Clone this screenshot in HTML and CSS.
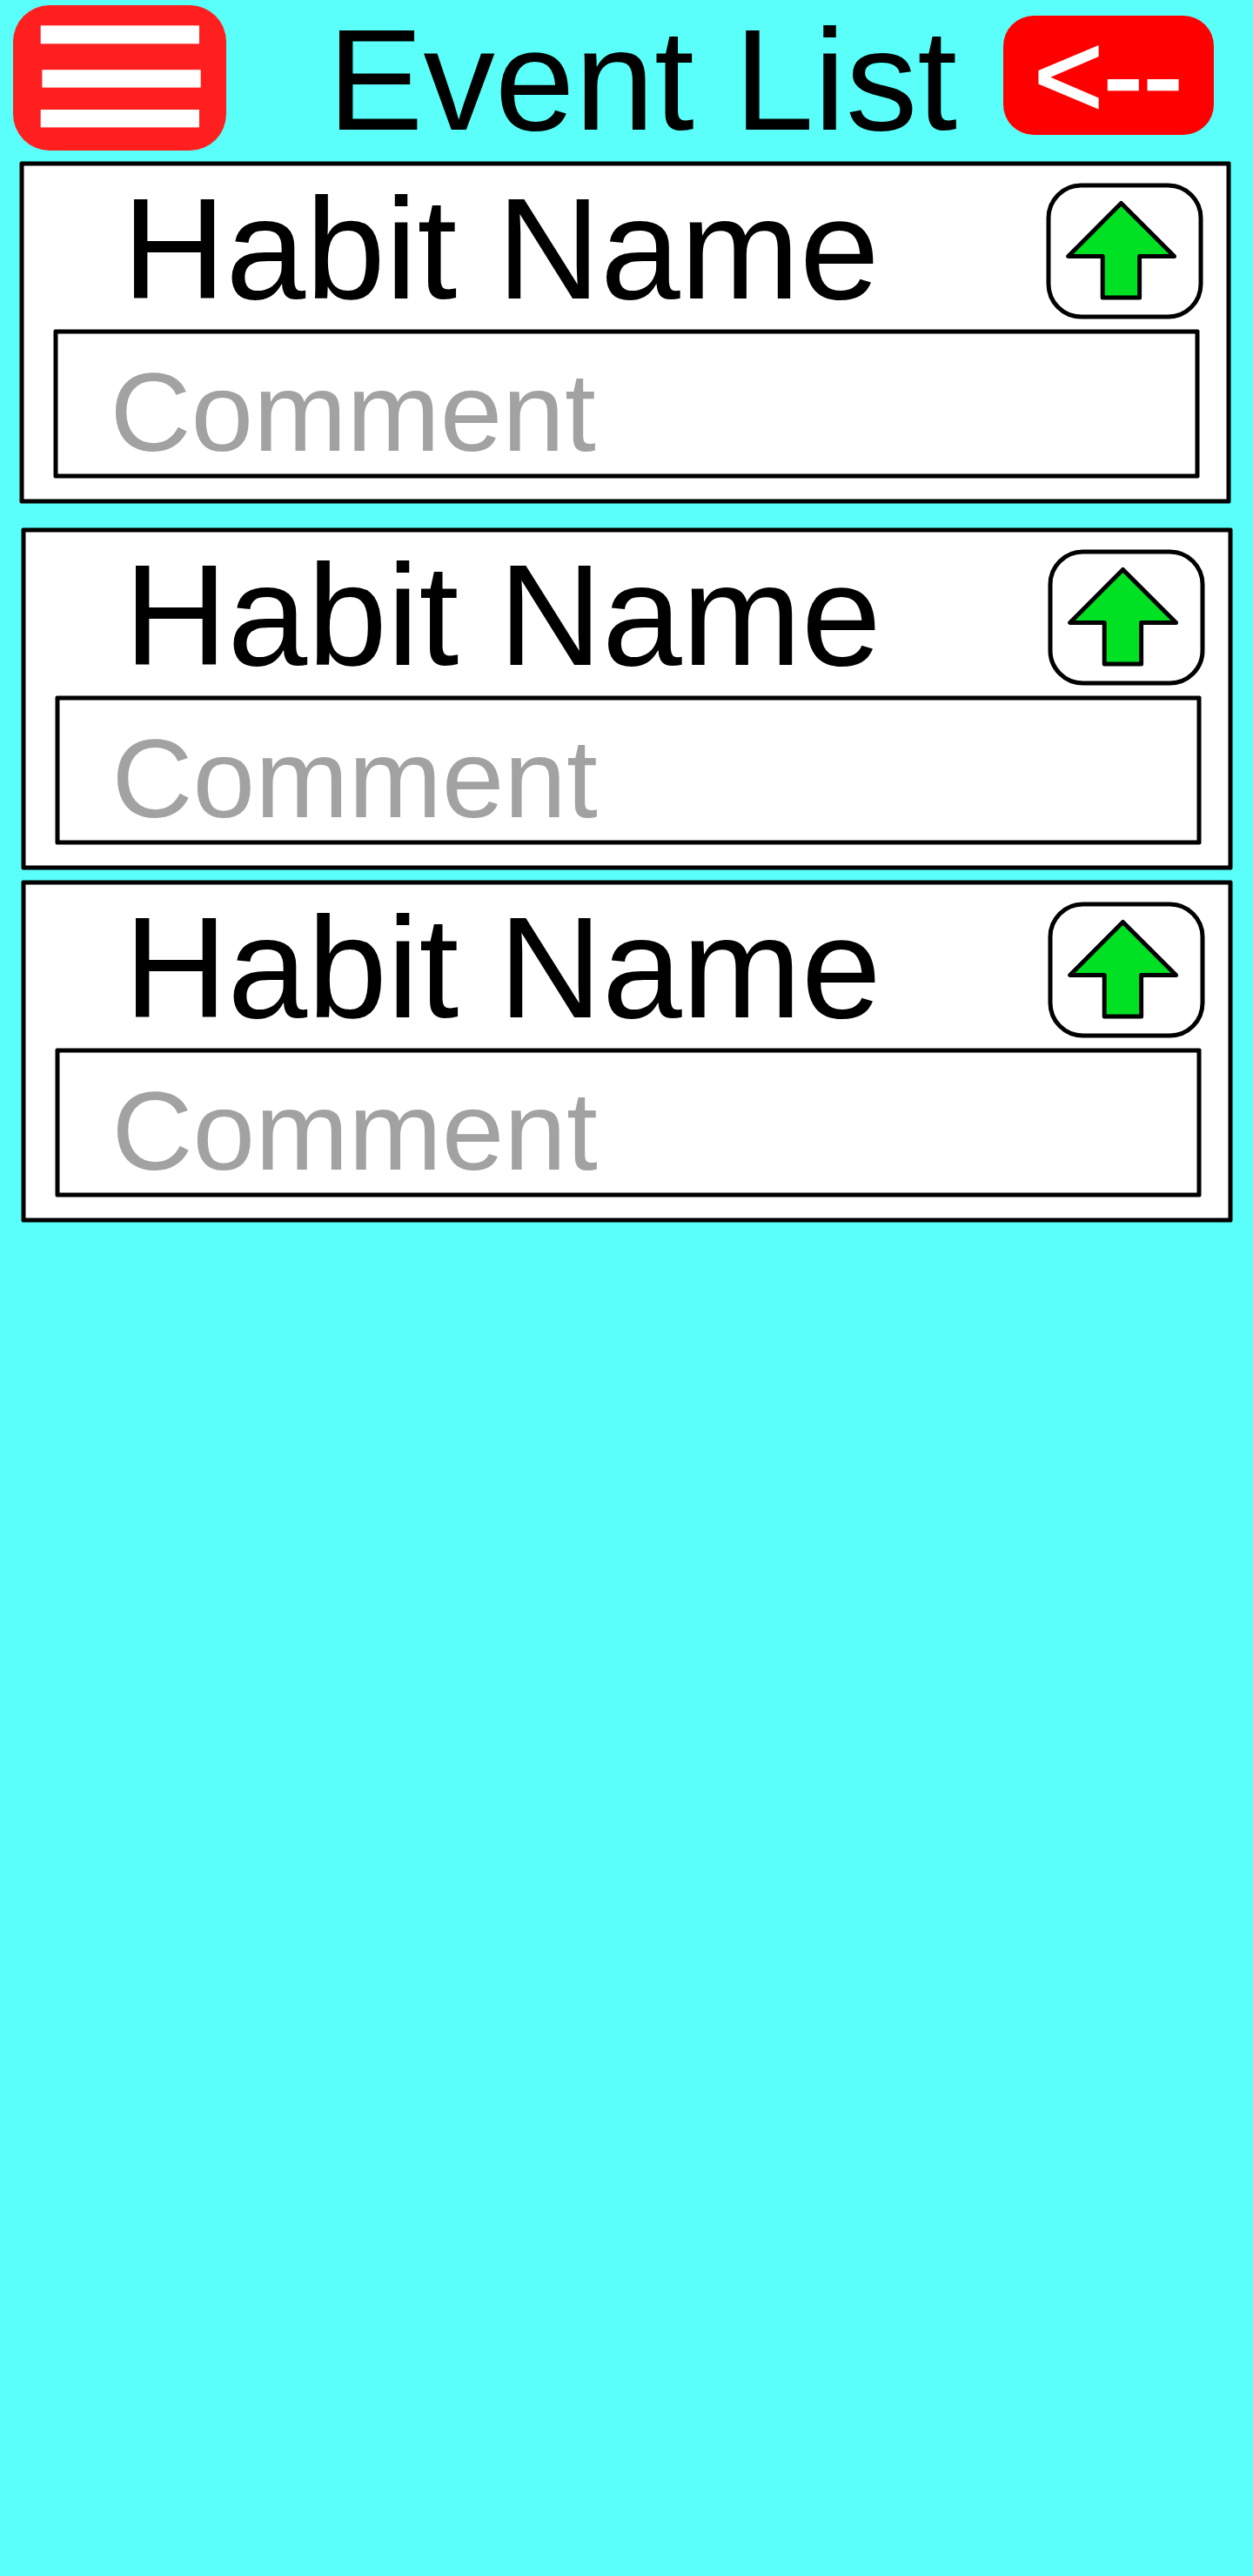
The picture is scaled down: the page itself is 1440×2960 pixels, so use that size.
FILE: index.html
```html
<!DOCTYPE html>
<html lang="en">
<head>
<meta charset="utf-8">
<title>Event List</title>
<link rel="stylesheet" href="styles.css">
</head>
<body>
<header class="topbar">
  <button class="menu" aria-label="Menu">
    <svg width="245" height="167" viewBox="0 0 245 167" fill="#fff">
      <rect x="31.7" y="23.3" width="182.3" height="21"/>
      <rect x="33.4" y="74.2" width="182.3" height="20.4"/>
      <rect x="31.7" y="120" width="182.3" height="20.4"/>
    </svg>
  </button>
  <h1 class="title">Event List</h1>
  <button class="back">&lt;--</button>
</header>
<main class="events">
  <article class="card card-first">
    <div class="card-head">
      <h2 class="name">Habit Name</h2>
      <button class="up" aria-label="Expand">
        <svg width="170" height="146" viewBox="5 5 170 146"><path class="arrow" d="M86 23 25.2 84H64.7V131.4H107.1V84H147Z"/></svg>
      </button>
    </div>
    <div class="comment">Comment</div>
  </article>
  <article class="card">
    <div class="card-head">
      <h2 class="name">Habit Name</h2>
      <button class="up" aria-label="Expand">
        <svg width="170" height="146" viewBox="5 5 170 146"><path class="arrow" d="M86 23 25.2 84H64.7V131.4H107.1V84H147Z"/></svg>
      </button>
    </div>
    <div class="comment">Comment</div>
  </article>
  <article class="card card-last">
    <div class="card-head">
      <h2 class="name">Habit Name</h2>
      <button class="up" aria-label="Expand">
        <svg width="170" height="146" viewBox="5 5 170 146"><path class="arrow" d="M86 23 25.2 84H64.7V131.4H107.1V84H147Z"/></svg>
      </button>
    </div>
    <div class="comment">Comment</div>
  </article>
</main>
</body>
</html>
```

FILE: styles.css
```css
* { box-sizing: border-box; }

body {
  margin: 0;
  min-height: 2960px;
  background: #59fff8;
  color: #000;
  font-family: "Liberation Sans", Arial, sans-serif;
}

h1, h2 { margin: 0; font-weight: 400; }

button {
  display: block;
  flex: none;
  margin: 0;
  padding: 0;
  border: 0;
  font-family: inherit;
}

svg { display: block; }

.topbar {
  display: flex;
  align-items: flex-start;
  height: 185px;
  padding: 6px 45px 0 15px;
}

.menu {
  width: 245px;
  height: 167px;
  border-radius: 42px;
  background: #ff1f1f;
}

.title {
  flex: 1;
  margin-left: 116.5px;
  font-size: 164.8px;
  line-height: 172px;
  white-space: nowrap;
}

.back {
  width: 242px;
  height: 137px;
  margin-top: 12px;
  padding: 1px 0 0 35px;
  border-radius: 35px;
  background: #f00;
  color: #fff;
  font-size: 137px;
  line-height: 134px;
  text-align: left;
  white-space: nowrap;
  -webkit-text-stroke: 2.5px #fff;
}

.events {
  display: flex;
  flex-direction: column;
  padding-left: 24px;
}

.card {
  width: 1392px;
  height: 393px;
  padding: 0 31px 0 34px;
  border: 5px solid #000;
  border-radius: 2px;
  background: #fff;
  transform: translate(0.5px, 0.5px);
}

.card-first { margin: 0 0 28px -2px; }
.card-last { margin-top: 12px; }

.card-head {
  display: flex;
  justify-content: space-between;
  height: 188px;
  margin-right: -4px;
  padding: 20px 0 0 79px;
}

.name {
  font-size: 164.8px;
  line-height: 151px;
  white-space: nowrap;
}

.up {
  width: 180px;
  height: 156px;
  border: 5px solid #000;
  border-radius: 40px;
  background: #fff;
}

.arrow {
  fill: #00e124;
  stroke: #000;
  stroke-width: 5;
  stroke-linejoin: round;
}

.comment {
  width: 1317px;
  height: 171px;
  padding: 9px 0 0 60px;
  border: 5px solid #000;
  border-radius: 2px;
  color: #a2a2a2;
  font-size: 128.8px;
  line-height: 161px;
}
```
